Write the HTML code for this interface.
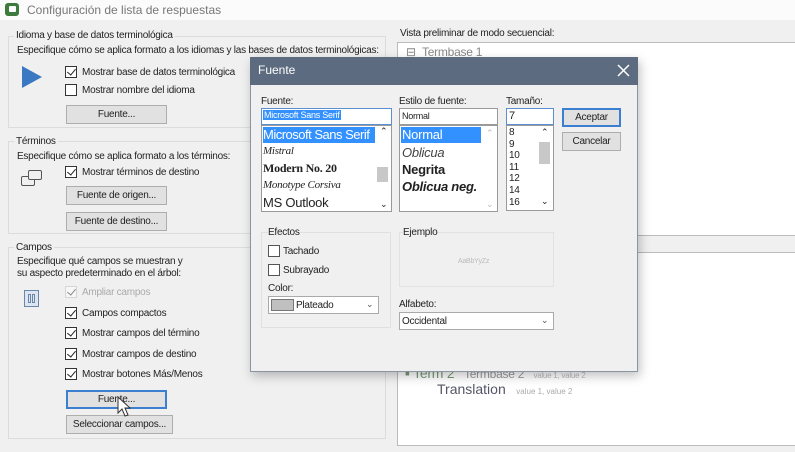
<!DOCTYPE html>
<html><head><meta charset="utf-8"><style>
*{box-sizing:border-box;margin:0;padding:0}
body{width:795px;height:452px;overflow:hidden;background:#f0f0f0;font-family:"Liberation Sans",sans-serif;font-size:10px;letter-spacing:-0.25px;color:#222;position:relative}
.a{position:absolute;white-space:nowrap}
.grp{position:absolute;border:1px solid #dcdcdc}
.cb{position:absolute;width:12px;height:12px;border:1px solid #333;background:#fff}
.cb.k::after{content:"";position:absolute;left:3px;top:0px;width:4px;height:7px;border:solid #222;border-width:0 1.5px 1.5px 0;transform:rotate(40deg)}
.btn{position:absolute;background:#e1e1e1;border:1px solid #adadad;text-align:center;line-height:17px}
.box{position:absolute;background:#fff;border:1px solid #9a9a9a}
.sel{background:#3390ff;color:#fff}
</style></head><body>
<div class="a" style="left:0;top:0;width:795px;height:20px;background:#fbfbfb"></div>
<div class="a" style="left:5px;top:3px;width:14px;height:13px;border-radius:3px;background:#3d7a3d"></div>
<div class="a" style="left:9px;top:6px;width:7px;height:6px;background:#fff;border-radius:1px"></div>
<div class="a" style="left:27px;top:3px;font-size:12px;color:#777;letter-spacing:0">Configuración de lista de respuestas</div>

<div class="grp" style="left:8px;top:36px;width:378px;height:92px"></div>
<div class="a" style="left:14px;top:30px;background:#f0f0f0;padding:0 2px">Idioma y base de datos terminológica</div>
<div class="a" style="left:17px;top:45px">Especifique cómo se aplica formato a los idiomas y las bases de datos terminológicas:</div>
<svg class="a" style="left:20px;top:65px" width="24" height="24"><polygon points="2,1 22,12 2,23" fill="#3a78c2"/></svg>
<div class="cb k" style="left:65px;top:66px"></div><div class="a" style="left:82px;top:67px">Mostrar base de datos terminológica</div>
<div class="cb" style="left:65px;top:84px"></div><div class="a" style="left:82px;top:85px">Mostrar nombre del idioma</div>
<div class="btn" style="left:66px;top:105px;width:101px;height:19px">Fuente...</div>

<div class="grp" style="left:8px;top:141px;width:378px;height:93px"></div>
<div class="a" style="left:14px;top:136px;background:#f0f0f0;padding:0 2px">Términos</div>
<div class="a" style="left:17px;top:151px">Especifique cómo se aplica formato a los términos:</div>
<div class="a" style="left:21px;top:176px;width:14px;height:10px;border:1.5px solid #555;border-radius:2px"></div>
<div class="a" style="left:28px;top:170px;width:14px;height:10px;border:1.5px solid #555;border-radius:2px;background:#f0f0f0"></div>
<div class="cb k" style="left:65px;top:166px"></div><div class="a" style="left:82px;top:167px">Mostrar términos de destino</div>
<div class="btn" style="left:66px;top:186px;width:101px;height:19px">Fuente de origen...</div>
<div class="btn" style="left:66px;top:212px;width:101px;height:19px">Fuente de destino...</div>

<div class="grp" style="left:8px;top:247px;width:378px;height:192px"></div>
<div class="a" style="left:14px;top:242px;background:#f0f0f0;padding:0 2px">Campos</div>
<div class="a" style="left:17px;top:256px;line-height:12px">Especifique qué campos se muestran y<br>su aspecto predeterminado en el árbol:</div>
<div class="a" style="left:24px;top:290px;width:15px;height:17px;border:1px solid #6a86a8;background:#dde6f0"></div>
<div class="a" style="left:28px;top:294px;width:3px;height:9px;border:1px solid #6a86a8"></div>
<div class="a" style="left:32px;top:294px;width:3px;height:9px;border:1px solid #6a86a8"></div>
<div class="cb k" style="left:65px;top:286px;border-color:#bbb;opacity:.5"></div><div class="a" style="left:82px;top:287px;color:#aaa">Ampliar campos</div>
<div class="cb k" style="left:65px;top:307px"></div><div class="a" style="left:82px;top:308px">Campos compactos</div>
<div class="cb k" style="left:65px;top:327px"></div><div class="a" style="left:82px;top:328px">Mostrar campos del término</div>
<div class="cb k" style="left:65px;top:348px"></div><div class="a" style="left:82px;top:349px">Mostrar campos de destino</div>
<div class="cb k" style="left:65px;top:368px"></div><div class="a" style="left:82px;top:369px">Mostrar botones Más/Menos</div>
<div class="btn" style="left:66px;top:390px;width:101px;height:19px;border:2px solid #3a7fd0;line-height:15px">Fuente...</div>
<div class="btn" style="left:66px;top:415px;width:107px;height:19px">Seleccionar campos...</div>
<svg class="a" style="left:117px;top:396px" width="18" height="24"><path d="M1,1 L1,17 L5,13 L8,20 L11,19 L8,12 L13,12 Z" fill="#fff" stroke="#333" stroke-width="1"/></svg>

<div class="a" style="left:400px;top:28px">Vista preliminar de modo secuencial:</div>
<div class="box" style="left:397px;top:42px;width:400px;height:194px;border-color:#bbb"></div>
<div class="a" style="left:406px;top:45px;color:#888;font-size:12px">⊟ &nbsp;Termbase 1</div>
<div class="box" style="left:397px;top:252px;width:400px;height:194px;border-color:#bbb"></div>
<div class="a" style="left:405px;top:365px;font-size:14px;color:#7a9a7a">▪ Term 2 <span style="color:#999;font-size:12px">&nbsp; Termbase 2 &nbsp;&nbsp;</span><span style="color:#bbb;font-size:8px">value 1, value 2</span></div>
<div class="a" style="left:437px;top:381px;font-size:14px;color:#556;letter-spacing:0">Translation <span style="color:#aaa;font-size:8px">&nbsp;&nbsp; value 1, value 2</span></div>

<div class="a" style="left:250px;top:57px;width:388px;height:315px;background:#f0f0f0;border:1px solid #8a95a3;box-shadow:2px 4px 10px rgba(0,0,0,.25)"></div>
<div class="a" style="left:250px;top:57px;width:388px;height:28px;background:#5c6b7f"></div>
<div class="a" style="left:258px;top:63px;color:#fff;font-size:12px;letter-spacing:0">Fuente</div>
<svg class="a" style="left:617px;top:64px" width="13" height="13"><path d="M1,1 L12,12 M12,1 L1,12" stroke="#fff" stroke-width="1.5"/></svg>

<div class="a" style="left:261px;top:96px">Fuente:</div>
<div class="box" style="left:261px;top:108px;width:131px;height:17px;border-color:#5b8fd0"></div>
<div class="a sel" style="left:263px;top:110px;font-size:9px;padding:0 1px">Microsoft Sans Serif</div>
<div class="box" style="left:261px;top:125px;width:131px;height:87px"></div>
<div class="a sel" style="left:263px;top:127px;width:112px;height:16px;font-size:13px;overflow:hidden;line-height:16px;letter-spacing:-0.5px">Microsoft Sans Serif</div>
<div class="a" style="left:263px;top:145px;font-family:'Liberation Serif';font-style:italic;font-size:11px">Mistral</div>
<div class="a" style="left:263px;top:161px;font-family:'Liberation Serif';font-weight:bold;font-size:12px">Modern No. 20</div>
<div class="a" style="left:263px;top:179px;font-family:'Liberation Serif';font-style:italic;font-size:11px">Monotype Corsiva</div>
<div class="a" style="left:263px;top:195px;font-size:13px">MS Outlook</div>
<div class="a" style="left:380px;top:126px;font-size:9px">⌃</div>
<div class="a" style="left:377px;top:167px;width:11px;height:15px;background:#c8c8c8"></div>
<div class="a" style="left:380px;top:199px;font-size:9px">⌄</div>

<div class="a" style="left:399px;top:96px">Estilo de fuente:</div>
<div class="box" style="left:399px;top:108px;width:99px;height:17px"></div>
<div class="a" style="left:402px;top:111px;font-size:9px">Normal</div>
<div class="box" style="left:399px;top:125px;width:99px;height:87px"></div>
<div class="a sel" style="left:401px;top:127px;width:80px;height:16px;font-size:13px;line-height:16px;padding-left:1px">Normal</div>
<div class="a" style="left:402px;top:145px;font-style:italic;font-size:13px;color:#444">Oblicua</div>
<div class="a" style="left:402px;top:162px;font-weight:bold;font-size:13px">Negrita</div>
<div class="a" style="left:402px;top:179px;font-weight:bold;font-style:italic;font-size:13px">Oblicua neg.</div>
<div class="a" style="left:486px;top:128px;font-size:9px;color:#bbb">⌃</div>
<div class="a" style="left:486px;top:199px;font-size:9px;color:#bbb">⌄</div>

<div class="a" style="left:506px;top:96px">Tamaño:</div>
<div class="box" style="left:506px;top:108px;width:48px;height:17px;border-color:#5b8fd0"></div>
<div class="a" style="left:509px;top:110px;font-size:11px">7</div>
<div class="box" style="left:506px;top:125px;width:48px;height:86px"></div>
<div class="a" style="left:509px;top:127px;font-size:10px;line-height:11.6px">8<br>9<br>10<br>11<br>12<br>14<br>16</div>
<div class="a" style="left:541px;top:127px;font-size:9px">⌃</div>
<div class="a" style="left:539px;top:142px;width:11px;height:22px;background:#c8c8c8"></div>
<div class="a" style="left:541px;top:196px;font-size:9px">⌄</div>

<div class="btn" style="left:562px;top:108px;width:59px;height:19px;border:2px solid #3a7fd0;line-height:15px">Aceptar</div>
<div class="btn" style="left:562px;top:132px;width:59px;height:19px">Cancelar</div>

<div class="grp" style="left:261px;top:232px;width:130px;height:96px;border-color:#e0e0e0"></div>
<div class="a" style="left:268px;top:227px;background:#f0f0f0">Efectos</div>
<div class="cb" style="left:268px;top:245px;border-color:#555"></div><div class="a" style="left:283px;top:246px">Tachado</div>
<div class="cb" style="left:268px;top:264px;border-color:#555"></div><div class="a" style="left:283px;top:265px">Subrayado</div>
<div class="a" style="left:268px;top:283px">Color:</div>
<div class="box" style="left:268px;top:296px;width:111px;height:18px;border-color:#aaa"></div>
<div class="a" style="left:271px;top:299px;width:23px;height:12px;background:#c0c0c0;border:1px solid #777"></div>
<div class="a" style="left:296px;top:300px">Plateado</div>
<div class="a" style="left:366px;top:299px;font-size:9px;color:#555">⌄</div>

<div class="grp" style="left:399px;top:232px;width:155px;height:55px;border-color:#e2e2e2"></div>
<div class="a" style="left:403px;top:227px;background:#f0f0f0">Ejemplo</div>
<div class="a" style="left:458px;top:258px;font-size:7px;color:#bbb">AaBbYyZz</div>
<div class="a" style="left:399px;top:299px">Alfabeto:</div>
<div class="box" style="left:399px;top:312px;width:155px;height:18px;border-color:#aaa"></div>
<div class="a" style="left:402px;top:316px">Occidental</div>
<div class="a" style="left:541px;top:315px;font-size:9px;color:#555">⌄</div>
</body></html>
